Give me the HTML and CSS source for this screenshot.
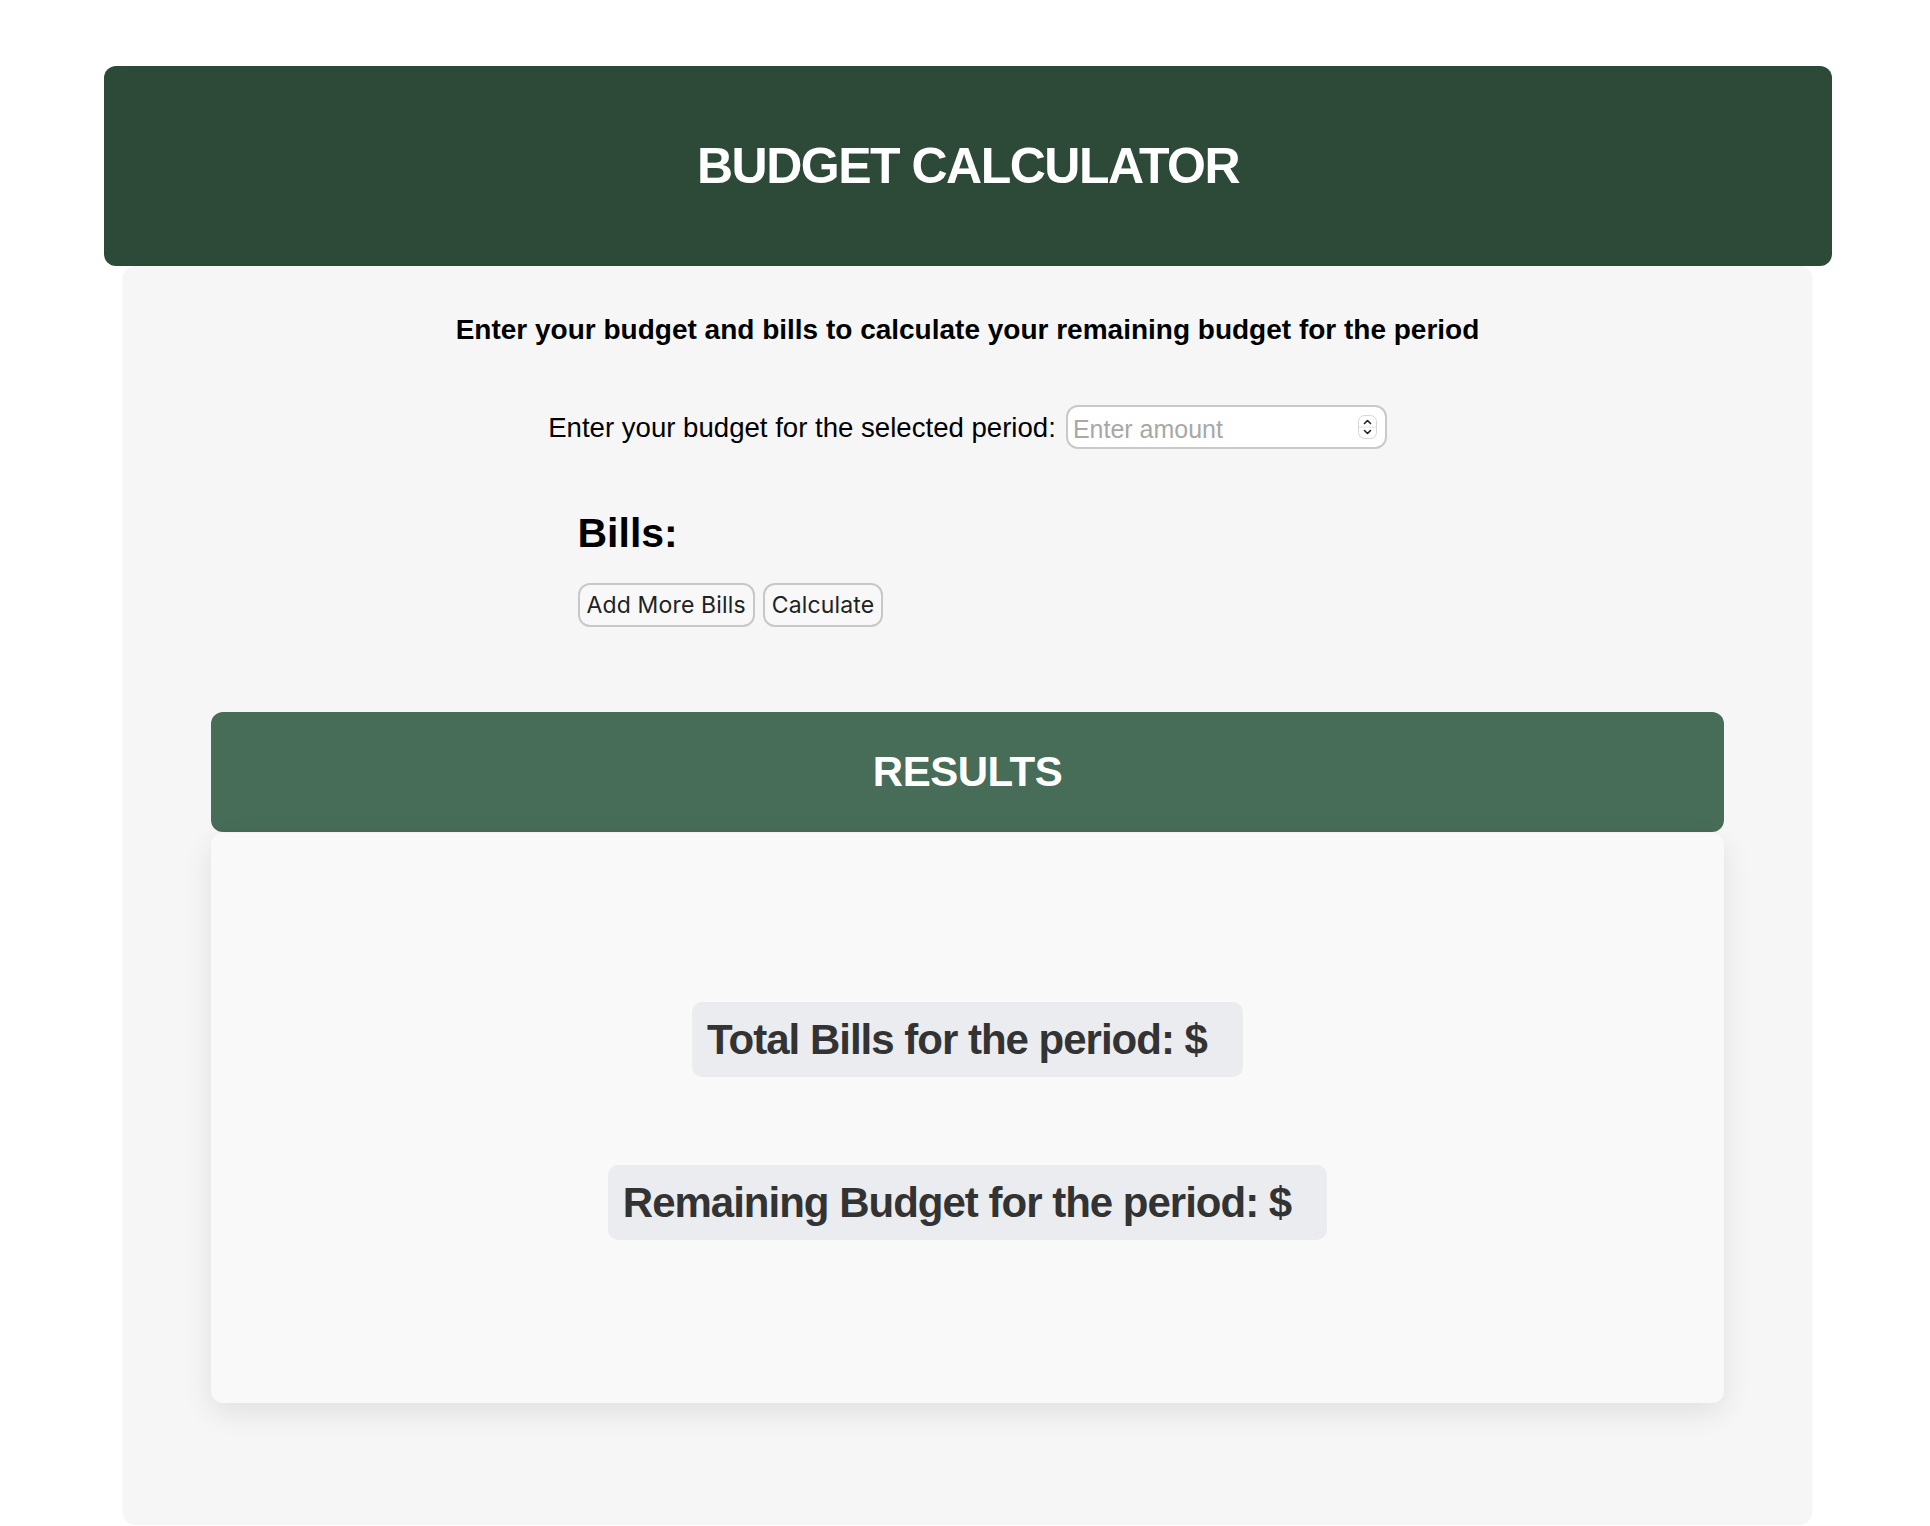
FILE: index.html
```html
<!DOCTYPE html>
<html lang="en">
<head>
<meta charset="utf-8">
<title>Budget Calculator</title>
<link rel="stylesheet" href="styles.css">
</head>
<body>
<header class="app-header">
  <h1 class="app-title">BUDGET CALCULATOR</h1>
</header>
<main class="calculator">
  <p class="intro">Enter your budget and bills to calculate your remaining budget for the period</p>
  <div class="budget-row">
    <label class="budget-label" for="budget">Enter your budget for the selected period:</label>
    <div class="amount-field">
      <input class="amount-input" id="budget" type="text" placeholder="Enter amount">
      <span class="spinner" aria-hidden="true">
        <svg width="19" height="24" viewBox="0 0 19 24">
          <rect x="0.5" y="0.5" width="18" height="23" rx="6" fill="#fff" stroke="#d6d6d6"/>
          <line x1="1" y1="12" x2="18" y2="12" stroke="#e0e0e0"/>
          <path d="M6.5 8.5 L9.5 5.5 L12.5 8.5" fill="none" stroke="#222" stroke-width="1.6" stroke-linecap="round" stroke-linejoin="round"/>
          <path d="M6.5 15.5 L9.5 18.5 L12.5 15.5" fill="none" stroke="#222" stroke-width="1.6" stroke-linecap="round" stroke-linejoin="round"/>
        </svg>
      </span>
    </div>
  </div>
  <section class="bills">
    <h2 class="bills-title">Bills:</h2>
    <div class="bill-actions">
      <button class="btn" type="button">Add More Bills</button>
      <button class="btn" type="button">Calculate</button>
    </div>
  </section>
  <section class="results">
    <div class="results-header">
      <h2 class="results-title">RESULTS</h2>
    </div>
    <div class="results-body">
      <div class="result-line">Total Bills for the period: $<span class="result-value"></span></div>
      <div class="result-line">Remaining Budget for the period: $<span class="result-value"></span></div>
    </div>
  </section>
</main>
</body>
</html>
```

FILE: styles.css
```css
* {
  box-sizing: border-box;
}

html, body {
  background: #ffffff;
}

body {
  margin: 0;
  font-family: "Liberation Sans", Arial, Helvetica, sans-serif;
  color: #000;
}

.app-header {
  width: 1728px;
  height: 200px;
  margin: 66px 0 0 104px;
  background: #2d4a38;
  border-radius: 12px;
  display: flex;
  align-items: center;
  justify-content: center;
}

.app-title {
  margin: 0;
  color: #ffffff;
  font-size: 50px;
  font-weight: 700;
  letter-spacing: -1.5px;
  line-height: 60px;
}

.calculator {
  width: 1689px;
  margin: 0 0 0 123px;
  background: #f6f6f6;
  border-radius: 14px;
  box-shadow: 0 0 2px rgba(0, 0, 0, 0.08);
  padding: 48px 88px 122px;
}

.intro {
  margin: 0;
  text-align: center;
  font-size: 28px;
  font-weight: 700;
  line-height: 32px;
}

.budget-row {
  margin-top: 59px;
  display: flex;
  justify-content: center;
  align-items: center;
  gap: 10px;
}

.budget-label {
  font-size: 27.6px;
  line-height: 32px;
  padding-top: 2px;
}

.amount-field {
  width: 321px;
  height: 44px;
  border: 2px solid #c9c9c9;
  border-radius: 12px;
  background: #ffffff;
  display: flex;
  align-items: center;
  padding: 0 8px 0 5px;
}

.amount-input {
  flex: 1;
  min-width: 0;
  border: none;
  outline: none;
  background: transparent;
  font-family: "Liberation Sans", Arial, sans-serif;
  font-size: 25px;
  color: #333;
  padding: 4px 0 0;
}

.amount-input::placeholder {
  color: #a8a8a8;
}

.spinner {
  display: flex;
  width: 19px;
  height: 24px;
}

.bills {
  width: 780px;
  margin: 60px auto 0;
}

.bills-title {
  margin: 0;
  font-size: 41px;
  font-weight: 700;
  line-height: 48px;
}

.bill-actions {
  margin-top: 26px;
  display: flex;
  gap: 8px;
}

.btn {
  height: 44px;
  padding: 0 7px;
  border: 2px solid #c8c8c8;
  border-radius: 12px;
  background: #f8f8f8;
  color: #222;
  font-family: Inter, "Noto Sans", sans-serif;
  font-size: 23px;
  line-height: 40px;
  letter-spacing: 0.15px;
}

.results {
  margin-top: 85px;
}

.results-header {
  height: 120px;
  background: #476c57;
  border-radius: 12px;
  display: flex;
  align-items: center;
  justify-content: center;
}

.results-title {
  margin: 0;
  color: #ffffff;
  font-size: 42px;
  font-weight: 700;
  letter-spacing: -0.5px;
  line-height: 48px;
}

.results-body {
  margin-top: 1px;
  height: 570px;
  background: #f9f9f9;
  border-radius: 12px;
  box-shadow: 0 10px 30px rgba(0, 0, 0, 0.09);
  display: flex;
  flex-direction: column;
  align-items: center;
  justify-content: center;
  gap: 88px;
  padding-top: 6px;
}

.result-line {
  background: #ebecef;
  border-radius: 10px;
  padding: 14px 36px 13px 15px;
  color: #333;
  font-size: 42px;
  font-weight: 700;
  letter-spacing: -1px;
  line-height: 48px;
}
```
